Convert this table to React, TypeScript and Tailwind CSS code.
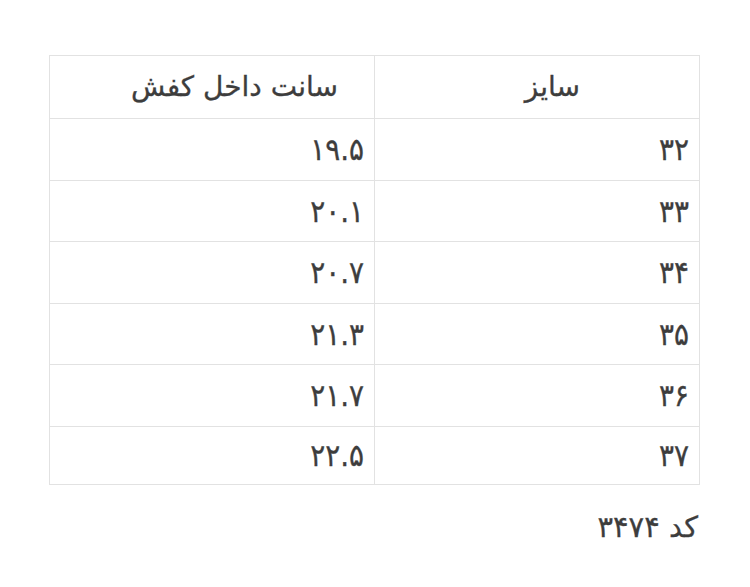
const rows = [
  { size: "۳۲", cm: "۱۹.۵" },
  { size: "۳۳", cm: "۲۰.۱" },
  { size: "۳۴", cm: "۲۰.۷" },
  { size: "۳۵", cm: "۲۱.۳" },
  { size: "۳۶", cm: "۲۱.۷" },
  { size: "۳۷", cm: "۲۲.۵" },
]

export default function App() {
  return (
    <div
      dir="rtl"
      className="w-[750px] h-[587px] bg-white text-[#3d3d3d] pt-[55px] pr-[50px] [-webkit-text-stroke:0.3px_#3d3d3d]"
      style={{ fontFamily: '"DejaVu Sans Condensed", "DejaVu Sans", sans-serif' }}
    >
      <table className="w-[651px] border-collapse border border-[#e2e2e2]">
        <thead>
          <tr className="h-[63px] font-['DejaVu_Sans',sans-serif]">
            <th className="w-[325px] border border-[#e2e2e2] text-right pr-[119px] text-[28px] font-normal">
              سایز
            </th>
            <th className="border border-[#e2e2e2] text-right pr-[36px] text-[28px] font-normal">
              سانت داخل کفش
            </th>
          </tr>
        </thead>
        <tbody>
          {rows.map((r, i) => (
            <tr key={r.size} className={i === rows.length - 1 ? "h-[58px]" : "h-[61.5px]"}>
              <td className="border border-[#e2e2e2] text-right pr-[10px] text-[31px]">{r.size}</td>
              <td className="border border-[#e2e2e2] text-right pr-[10px] text-[31px]">{r.cm}</td>
            </tr>
          ))}
        </tbody>
      </table>
      <p className="mt-[21px] pr-[2px] text-[29px] font-['DejaVu_Sans',sans-serif]">کد ۳۴۷۴</p>
    </div>
  )
}
